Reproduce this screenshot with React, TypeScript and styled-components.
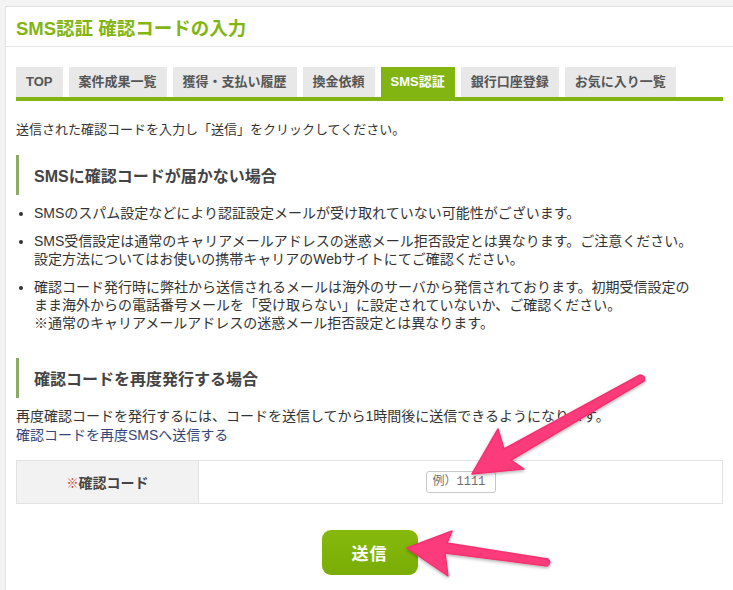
import React from "react";
import styled, { createGlobalStyle } from "styled-components";

const GlobalStyle = createGlobalStyle`
  html, body { margin: 0; padding: 0; background: #f3f3f3; }
  body {
    font-family: "Liberation Sans", "Noto Sans CJK JP", sans-serif;
    color: #333;
  }
  * { box-sizing: border-box; }
`;

const green = "#82b511";

const Page = styled.div`
  position: relative;
  width: 733px;
  height: 590px;
  overflow: hidden;
  padding: 6px 0 0 5px;
`;

const Card = styled.div`
  background: #fff;
  border: 1px solid #e3e3e3;
  border-right: none;
  min-height: 620px;
`;

const Header = styled.div`
  height: 40px;
  display: flex;
  align-items: center;
  padding: 1px 10px 0;
  border-bottom: 1px solid #e6e6e6;
`;

const Title = styled.h1`
  margin: 0;
  font-size: 18.5px;
  font-weight: bold;
  color: ${green};
`;

const Body = styled.div`
  padding: 20px 10px 0 10px;
`;

const Tabs = styled.div`
  display: flex;
  gap: 6px;
  border-bottom: 4px solid ${green};
`;

const Tab = styled.div<{ $active?: boolean }>`
  height: 30px;
  line-height: 30px;
  padding: 0 10px;
  font-size: 13px;
  font-weight: bold;
  background: ${(p) => (p.$active ? green : "#e8e8e8")};
  color: ${(p) => (p.$active ? "#fff" : "#555")};
  white-space: nowrap;
`;

const Intro = styled.p`
  margin: 20px 0 0;
  font-size: 13px;
  line-height: 18px;
`;

const SectionHeading = styled.h2<{ $gap: number }>`
  margin: ${(p) => p.$gap}px 0 0;
  height: 40px;
  display: flex;
  align-items: center;
  padding-left: 15px;
  border-left: 3px solid #8dab62;
  font-size: 16px;
  font-weight: bold;
  color: #444;
`;

const List = styled.ul`
  margin: 9px 0 0;
  padding-left: 18px;
`;

const Item = styled.li`
  font-size: 14px;
  line-height: 18px;
  white-space: nowrap;
  & + & { margin-top: 10px; }
`;

const Para = styled.p`
  margin: 9px 0 0;
  font-size: 14px;
  line-height: 19px;
`;

const Link = styled.a`
  color: #34457a;
  text-decoration: none;
`;

const FormTable = styled.div`
  margin-top: 15px;
  height: 44px;
  display: flex;
  border: 1px solid #e2e2e2;
`;

const LabelCell = styled.div`
  width: 182px;
  background: #f2f2f2;
  border-right: 1px solid #e2e2e2;
  display: flex;
  align-items: center;
  justify-content: center;
  font-size: 14px;
  font-weight: bold;
  color: #444;
`;

const Req = styled.span`
  color: #c8352f;
  font-weight: normal;
  font-size: 12px;
`;

const InputCell = styled.div`
  flex: 1;
  display: flex;
  align-items: center;
  justify-content: center;
`;

const CodeInput = styled.input`
  width: 70px;
  height: 22px;
  border: 1px solid #c9c9c9;
  border-radius: 3px;
  padding: 0 6px;
  font-family: "Liberation Mono", "Noto Sans CJK JP", monospace;
  font-size: 12px;
  color: #333;
  outline: none;
  &::placeholder { color: #6f6f6f; }
`;

const ButtonRow = styled.div`
  display: flex;
  justify-content: center;
  margin-top: 26px;
`;

const SubmitButton = styled.button`
  width: 96px;
  height: 45px;
  border: none;
  border-radius: 9px;
  background: linear-gradient(#86b90c, #7aad05);
  color: #fff;
  font-family: "Liberation Sans", "Noto Sans CJK JP", sans-serif;
  font-size: 17px;
  font-weight: bold;
  letter-spacing: 1px;
`;

const Overlay = styled.svg`
  position: absolute;
  left: 0;
  top: 0;
  pointer-events: none;
`;

const tabs = ["TOP", "案件成果一覧", "獲得・支払い履歴", "換金依頼", "SMS認証", "銀行口座登録", "お気に入り一覧"];

export default function App() {
  return (
    <>
      <GlobalStyle />
      <Page>
        <Card>
          <Header>
            <Title>SMS認証 確認コードの入力</Title>
          </Header>
          <Body>
            <Tabs>
              {tabs.map((t) => (
                <Tab key={t} $active={t === "SMS認証"}>{t}</Tab>
              ))}
            </Tabs>
            <Intro>送信された確認コードを入力し「送信」をクリックしてください。</Intro>
            <SectionHeading $gap={16}>SMSに確認コードが届かない場合</SectionHeading>
            <List>
              <Item>SMSのスパム設定などにより認証設定メールが受け取れていない可能性がございます。</Item>
              <Item>
                SMS受信設定は通常のキャリアメールアドレスの迷惑メール拒否設定とは異なります。ご注意ください。<br />
                設定方法についてはお使いの携帯キャリアのWebサイトにてご確認ください。
              </Item>
              <Item>
                確認コード発行時に弊社から送信されるメールは海外のサーバから発信されております。初期受信設定の<br />
                まま海外からの電話番号メールを「受け取らない」に設定されていないか、ご確認ください。<br />
                ※通常のキャリアメールアドレスの迷惑メール拒否設定とは異なります。
              </Item>
            </List>
            <SectionHeading $gap={26}>確認コードを再度発行する場合</SectionHeading>
            <Para>
              再度確認コードを発行するには、コードを送信してから1時間後に送信できるようになります。<br />
              <Link href="#">確認コードを再度SMSへ送信する</Link>
            </Para>
            <FormTable>
              <LabelCell>
                <Req>※</Req>確認コード
              </LabelCell>
              <InputCell>
                <CodeInput placeholder="例）1111" />
              </InputCell>
            </FormTable>
            <ButtonRow>
              <SubmitButton>送信</SubmitButton>
            </ButtonRow>
          </Body>
        </Card>
        <Overlay width="733" height="590" viewBox="0 0 733 590">
          <defs>
            <filter id="sh" x="-10%" y="-10%" width="120%" height="130%">
              <feDropShadow dx="0" dy="1.5" stdDeviation="1.5" floodColor="#000" floodOpacity="0.3" />
            </filter>
          </defs>
          <g fill="#fb3b7c" stroke="#f4336f" strokeWidth="1.5" strokeLinejoin="round" filter="url(#sh)">
            <path d="M472 474 L498 429 L504 449 L640 375 Q646 376 644 381 L511 460 L524 469 Z" />
            <path d="M407 548 L452 531 L447 543 L548 559 Q552 563 547 566 L445 553 L448 576 Z" />
          </g>
        </Overlay>
      </Page>
    </>
  );
}
